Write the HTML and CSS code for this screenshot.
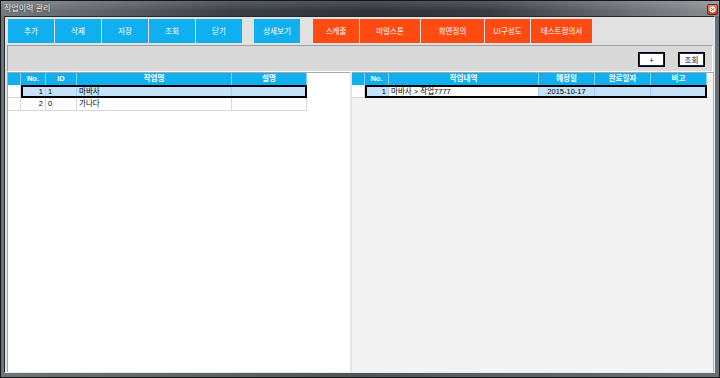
FILE: index.html
```html
<!DOCTYPE html>
<html lang="ko">
<head>
<meta charset="utf-8">
<title>작업이력 관리</title>
<link rel="stylesheet" href="styles.css">
</head>
<body>
<div class="window">
  <div class="titlebar">
    <span class="title">작업이력 관리</span>
    <span class="close">
      <svg width="11" height="11" viewBox="0 0 11 11">
        <defs>
          <linearGradient id="cg" x1="0" y1="0" x2="0" y2="1">
            <stop offset="0" stop-color="#f08a64"/>
            <stop offset="1" stop-color="#c43a1a"/>
          </linearGradient>
        </defs>
        <rect x="0.5" y="0.5" width="10" height="10" rx="1.5" fill="url(#cg)" stroke="#6e2a18"/>
        <circle cx="5.5" cy="5.5" r="3" fill="#ffffff"/>
        <path d="M4.2 4.2 L6.8 6.8 M6.8 4.2 L4.2 6.8" stroke="#c8441f" stroke-width="1"/>
      </svg>
    </span>
  </div>
  <div class="frame">
    <div class="client">
      <div class="toolbar">
        <div class="group">
          <button class="btn blue w46">추가</button>
          <button class="btn blue w46">삭제</button>
          <button class="btn blue w46">저장</button>
          <button class="btn blue w46">조회</button>
          <button class="btn blue w46">닫기</button>
        </div>
        <div class="group">
          <button class="btn blue w46">상세보기</button>
        </div>
        <div class="group">
          <button class="btn orange w46">스케줄</button>
          <button class="btn orange w60">마일스톤</button>
          <button class="btn orange w63">화면정의</button>
          <button class="btn orange w45">UI구성도</button>
          <button class="btn orange w61">테스트정의서</button>
        </div>
      </div>
      <div class="searchbar">
        <button class="sbtn">+</button>
        <button class="sbtn">조회</button>
      </div>
      <div class="grids">
        <div class="grid left">
          <div class="row head">
            <div class="rh hcell"></div>
            <div class="hcell l-no">No.</div>
            <div class="hcell l-id">ID</div>
            <div class="hcell l-name">작업명</div>
            <div class="hcell l-desc">설명</div>
          </div>
          <div class="row">
            <div class="rh"></div>
            <div class="body sel">
              <div class="c l-no num">1</div>
              <div class="c l-id">1</div>
              <div class="c l-name">마바사</div>
              <div class="c l-desc"></div>
            </div>
          </div>
          <div class="row">
            <div class="rh"></div>
            <div class="body">
              <div class="c l-no num">2</div>
              <div class="c l-id">0</div>
              <div class="c l-name">가나다</div>
              <div class="c l-desc"></div>
            </div>
          </div>
        </div>
        <div class="splitter"></div>
        <div class="grid right">
          <div class="row head">
            <div class="rh hcell"></div>
            <div class="hcell r-no">No.</div>
            <div class="hcell r-task">작업내역</div>
            <div class="hcell r-date">예정일</div>
            <div class="hcell r-done">완료일자</div>
            <div class="hcell r-note">비고</div>
          </div>
          <div class="row">
            <div class="rh"></div>
            <div class="body sel">
              <div class="c r-no num">1</div>
              <div class="c r-task edit">마바사 &gt; 작업7777</div>
              <div class="c r-date center">2015-10-17</div>
              <div class="c r-done"></div>
              <div class="c r-note"></div>
            </div>
          </div>
        </div>
      </div>
    </div>
  </div>
</div>
</body>
</html>
```

FILE: styles.css
```css
* {
  box-sizing: border-box;
  margin: 0;
  padding: 0;
}

html, body {
  width: 720px;
  height: 378px;
  overflow: hidden;
}

body {
  font-family: "Liberation Sans", "Noto Sans CJK KR", sans-serif;
  font-size: 7.5px;
  background: #2c3136;
  color: #000;
}

.window {
  width: 720px;
  height: 378px;
  display: flex;
  flex-direction: column;
  border: 1px solid #141618;
  background: #5f6469;
}

/* title bar */
.titlebar {
  height: 15px;
  flex: 0 0 15px;
  display: flex;
  align-items: flex-start;
  background:
    linear-gradient(to bottom, rgba(255,255,255,0.16), rgba(255,255,255,0) 70%),
    linear-gradient(to right, #777c81 0%, #5d6267 14%, #3a3f45 32%, #2d3238 52%, #363b41 68%, #666b70 86%, #8a8e92 100%);
}

.title {
  font-family: "Noto Sans CJK KR", sans-serif;
  font-size: 8px;
  line-height: 14px;
  padding-left: 3px;
  color: #f2f2f2;
  text-shadow: 0 0 2px #222;
}

.close {
  margin-left: auto;
  margin-right: 1px;
  margin-top: 3px;
  width: 11px;
  height: 11px;
  display: block;
}

.close svg {
  display: block;
}

/* frame and client */
.frame {
  flex: 1;
  display: flex;
  padding: 0 4px 4px 3px;
  background: linear-gradient(to right, #6f7479, #50555a 50%, #6a6f74);
}

.client {
  flex: 1;
  display: flex;
  flex-direction: column;
  border: 1px solid;
  border-color: #26292c #eaeaea #eaeaea #26292c;
  background: #e1e1e1;
}

/* toolbar */
.toolbar {
  height: 28px;
  flex: 0 0 28px;
  display: flex;
  align-items: flex-start;
  padding: 2px 0 0 3px;
}

.group {
  display: flex;
  gap: 1px;
  margin-right: 12px;
}

.group + .group + .group {
  margin-left: 1px;
}

.btn {
  height: 24px;
  border: none;
  color: #fff;
  font-family: "Noto Sans CJK KR", sans-serif;
  font-size: 7.5px;
  text-align: center;
  line-height: 24px;
}

.blue { background: #10b0f0; }
.orange { background: #ff4a12; }

.w46 { width: 46px; }
.w60 { width: 60px; }
.w63 { width: 63px; }
.w45 { width: 45px; }
.w61 { width: 61px; }

/* search bar */
.searchbar {
  height: 27px;
  flex: 0 0 27px;
  margin: 0 1px 0 2px;
  display: flex;
  justify-content: flex-end;
  align-items: flex-start;
  gap: 13px;
  padding: 6px 7px 0 0;
  border: 1px solid;
  border-color: #9d9d9d #ffffff #ffffff #9d9d9d;
  background: #d9d9d9;
}

.sbtn {
  width: 27px;
  height: 15px;
  background: #fff;
  border: 1px solid #000;
  box-shadow: inset 0 0 0 1px #20205e;
  font-family: "Noto Sans CJK KR", sans-serif;
  font-size: 7.5px;
  line-height: 12px;
  color: #10104a;
  text-align: center;
}

/* grids */
.grids {
  flex: 1;
  display: flex;
  margin-left: 2px;
}

.grid {
  border-top: 1px solid #a9a9a9;
}

.grid.left {
  width: 343px;
  border-left: 1px solid #a9a9a9;
  background: #fff;
}

.splitter {
  width: 2px;
  background: #e4e4e4;
}

.grid.right {
  flex: 1;
  background: #f3f3f3;
  border-right: 1px solid #b5b5b5;
}

.row {
  display: flex;
  height: 13px;
}

.row.head {
  height: 12px;
}

.hcell {
  height: 12px;
  background: #10b0f0;
  color: #fff;
  font-weight: bold;
  text-align: center;
  line-height: 12px;
  border-right: 1px solid #86d3f4;
  font-family: "Liberation Sans", "Noto Sans CJK KR", sans-serif;
  white-space: nowrap;
  overflow: hidden;
}

.rh {
  width: 13px;
  flex: 0 0 13px;
  height: 13px;
  background: #fff;
  border-right: 1px solid #d8d8d8;
  border-bottom: 1px solid #d8d8d8;
}

.rh.hcell {
  height: 12px;
  background: #10b0f0;
  border-bottom: none;
  border-right: 1px solid #86d3f4;
}

.body {
  display: flex;
  height: 13px;
}

.c {
  height: 13px;
  line-height: 12px;
  padding: 0 2px;
  white-space: nowrap;
  overflow: hidden;
  border-right: 1px solid #d8d8d8;
  border-bottom: 1px solid #d8d8d8;
  background: #fff;
}

.num { text-align: right; }
.center { text-align: center; }

.l-no { width: 25px; }
.l-id { width: 31px; }
.l-name { width: 155px; }
.l-desc { width: 75px; }

.r-no { width: 24px; }
.r-task { width: 150px; }
.r-date { width: 56px; }
.r-done { width: 56px; }
.r-note { width: 56px; }

/* selected row */
.body.sel {
  border: 2px solid #000;
}

.sel .c {
  height: 9px;
  line-height: 9px;
  background: #c6e2fb;
  border-bottom: none;
  border-right: 1px solid #a8cbe9;
}

.sel .c:last-child {
  border-right: none;
}

.sel .c.edit {
  background: #fff;
}

.sel .l-no { width: 23px; }
.sel .l-desc { width: 73px; }
.sel .r-no { width: 22px; }
.sel .r-note { width: 54px; }
```
